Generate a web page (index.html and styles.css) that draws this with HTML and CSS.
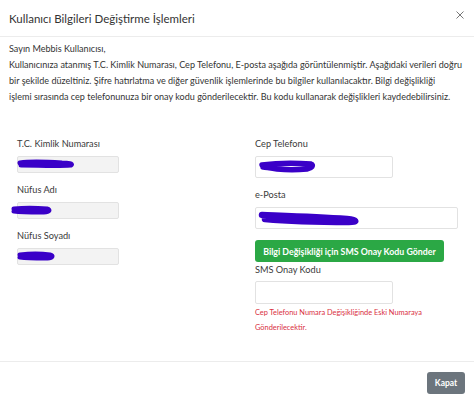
FILE: index.html
```html
<!DOCTYPE html>
<html lang="tr">
<head>
<meta charset="utf-8">
<title>Kullanıcı Bilgileri</title>
<link rel="stylesheet" href="styles.css">
</head>
<body>
<div class="modal">
  <div class="modal-header">
    <h5 class="modal-title">Kullanıcı Bilgileri Değiştirme İşlemleri</h5>
    <span class="close"><svg width="8" height="8" viewBox="0 0 8 8"><path d="M0.5 0.5L7.5 7.5M7.5 0.5L0.5 7.5" stroke="#777" stroke-width="1" fill="none"/></svg></span>
  </div>
  <div class="modal-body">
    <p class="intro">Sayın Mebbis Kullanıcısı,<br>Kullanıcınıza atanmış T.C. Kimlik Numarası, Cep Telefonu, E-posta aşağıda görüntülenmiştir. Aşağıdaki verileri doğru bir şekilde düzeltiniz. Şifre hatırlatma ve diğer güvenlik işlemlerinde bu bilgiler kullanılacaktır. Bilgi değişlikliği<br>işlemi sırasında cep telefonunuza bir onay kodu gönderilecektir. Bu kodu kullanarak değişlikleri kaydedebilirsiniz.</p>
    <div class="form-row">
      <div class="col">
        <div class="group">
          <label class="label">T.C. Kimlik Numarası</label>
          <div class="field">
            <input class="input input-disabled input-short" disabled>
            <svg class="scribble" width="70" height="12" viewBox="0 0 70 12"><path d="M3 5 C15 3 30 4 45 5 C52 5 56 6 54 7 C40 8 20 7 4 7" stroke="#3a00c8" stroke-width="5" stroke-linecap="round" fill="none"/></svg>
          </div>
        </div>
        <div class="group">
          <label class="label">Nüfus Adı</label>
          <div class="field">
            <input class="input input-disabled input-short" disabled>
            <svg class="scribble scribble-left" width="50" height="12" viewBox="0 0 50 12"><path d="M3 5 C12 4 25 4 36 5 C40 6 38 8 30 8 C20 8 10 8 3 7" stroke="#3a00c8" stroke-width="5" stroke-linecap="round" fill="none"/></svg>
          </div>
        </div>
        <div class="group">
          <label class="label">Nüfus Soyadı</label>
          <div class="field">
            <input class="input input-disabled input-short" disabled>
            <svg class="scribble" width="50" height="12" viewBox="0 0 50 12"><path d="M3 5 C12 4 25 4 33 5 C37 6 35 8 28 8 C18 8 10 8 3 7" stroke="#3a00c8" stroke-width="5" stroke-linecap="round" fill="none"/></svg>
          </div>
        </div>
      </div>
      <div class="col col-right">
        <div class="group">
          <label class="label">Cep Telefonu</label>
          <div class="field">
            <input class="input input-medium">
            <svg class="scribble scribble-tall" width="70" height="16" viewBox="0 0 70 16"><path d="M5 6 C20 4 40 4 54 5 C57 6 55 9 50 10 C40 11 30 11 20 10 C12 9 8 8 6 8" stroke="#3a00c8" stroke-width="5.5" stroke-linecap="round" fill="none"/></svg>
          </div>
        </div>
        <div class="group">
          <label class="label">e-Posta</label>
          <div class="field">
            <input class="input input-wide">
            <svg class="scribble scribble-tall" width="110" height="18" viewBox="0 0 110 18"><path d="M5 5 C30 6 60 7 90 9 C100 10 101 12 92 12 C70 12 40 12 8 9" stroke="#3a00c8" stroke-width="6.5" stroke-linecap="round" fill="none"/></svg>
          </div>
        </div>
        <button class="btn btn-success">Bilgi Değişikliği için SMS Onay Kodu Gönder</button>
        <label class="label label-sms">SMS Onay Kodu</label>
        <input class="input input-medium input-sms">
        <p class="warning">Cep Telefonu Numara Değişikliğinde Eski Numaraya<br>Gönderilecektir.</p>
      </div>
    </div>
  </div>
  <div class="modal-footer">
    <button class="btn btn-secondary">Kapat</button>
  </div>
</div>
</body>
</html>
```

FILE: styles.css
```css
* { box-sizing: border-box; }
html, body { margin: 0; padding: 0; background: #fff; }
body { font-family: Lato, "Open Sans", "Liberation Sans", sans-serif; color: #333; }

.modal {
  width: 474px;
  height: 403px;
  display: flex;
  flex-direction: column;
  background: #fff;
}

.modal-header {
  height: 37px;
  padding: 0 10px 0 9px;
  display: flex;
  align-items: center;
  justify-content: space-between;
  border-bottom: 1px solid #ececec;
}
.modal-title {
  margin: 0;
  font-size: 11.5px;
  font-weight: 400;
  color: #333;
}
.close { display: flex; width: 8px; height: 8px; margin-top: -6px; }

.modal-body {
  flex: 1;
  padding: 4px 9px 0 9px;
}
.intro {
  margin: 0;
  font-size: 9.05px;
  line-height: 16px;
  color: #333;
}

.form-row {
  display: flex;
  margin-top: 31px;
}
.col {
  width: 237px;
  padding-left: 8px;
  display: flex;
  flex-direction: column;
  align-items: flex-start;
}
.col-right { padding-left: 9px; width: 219px; }

.group { display: flex; flex-direction: column; margin-bottom: 9px; }
.label {
  font-size: 9.2px;
  line-height: 16px;
  height: 16px;
  color: #3a3a3a;
  margin-bottom: 4px;
}
.field { position: relative; }
.input {
  display: block;
  height: 22px;
  border: 1px solid #e2e2e2;
  border-radius: 2px;
  background: #fff;
  padding: 0 4px;
  font: inherit;
  margin: 0;
}
.input-disabled { background: #f3f3f3; height: 17px; }
.input-short { width: 102px; }
.input-medium { width: 138px; }
.input-wide { width: 203px; }

.scribble { position: absolute; left: 0; top: 2px; }
.scribble-left { left: -6px; top: 2px; }
.scribble-tall { left: 2px; top: 3px; }

.btn {
  font-family: inherit;
  border: none;
  border-radius: 3px;
  color: #fff;
  font-weight: 700;
  cursor: pointer;
  margin: 0;
}
.btn-success {
  margin-top: 2px;
  width: 189px;
  height: 22px;
  font-size: 8.8px;
  padding: 0;
  background: #2ba845;
}
.label-sms { margin-bottom: 3px; }
.input-sms { height: 23px; }
.warning {
  margin: 1px 0 0 0;
  font-size: 7.4px;
  line-height: 15px;
  color: #d9303f;
}

.modal-footer {
  height: 42px;
  border-top: 1px solid #ececec;
  display: flex;
  justify-content: flex-end;
  padding: 10px 9px 0 0;
}
.btn-secondary {
  width: 38px;
  height: 22px;
  font-size: 8.5px;
  background: #6c757d;
  padding: 0;
}
```
